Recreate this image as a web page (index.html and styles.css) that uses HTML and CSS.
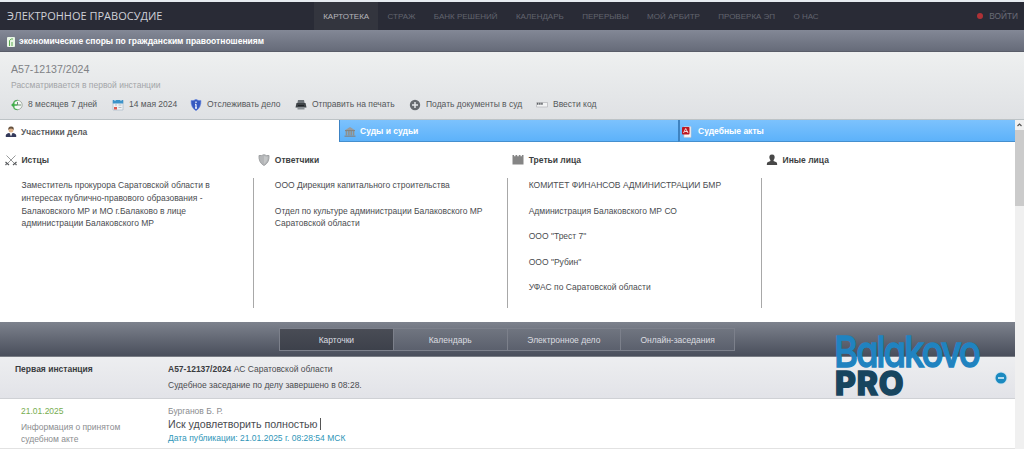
FILE: index.html
```html
<!DOCTYPE html>
<html lang="ru">
  <head>
    <meta charset="UTF-8" />
    <meta name="viewport" content="width=device-width, initial-scale=1.0" />
    <title>Электронное правосудие</title>
    <link rel="stylesheet" href="styles.css">
  </head>
  <body>
    <header class="topbar">
      <div class="brand">ЭЛЕКТРОННОЕ ПРАВОСУДИЕ</div>
      <nav class="menu">
        <a class="active">КАРТОТЕКА</a>
        <a>СТРАЖ</a>
        <a>БАНК РЕШЕНИЙ</a>
        <a>КАЛЕНДАРЬ</a>
        <a>ПЕРЕРЫВЫ</a>
        <a>МОЙ АРБИТР</a>
        <a>ПРОВЕРКА ЭП</a>
        <a>О НАС</a>
      </nav>
      <div class="login"><i></i>ВОЙТИ</div>
    </header>

    <div class="category">
      <svg width="8" height="10" viewBox="0 0 8 10">
        <rect width="8" height="10" rx="1" fill="#e9f6e6" />
        <path d="M2.5 9V3.5L4.2 2H6M5 5v4" stroke="#5cab52" fill="none" />
      </svg>
      <span>экономические споры по гражданским правоотношениям</span>
    </div>

    <section class="case">
      <h1>А57-12137/2024</h1>
      <p class="status">Рассматривается в первой инстанции</p>
      <div class="tools">
        <a class="t1">
          <svg width="12" height="12" viewBox="0 0 12 12">
            <circle cx="6.5" cy="6" r="4.7" fill="#f4f8f4" stroke="#a3aca5" />
            <path d="M6.5 10.7A4.7 4.7 0 0 1 2.5 8.5M2.5 3.5Q4 1.3 6.5 1.3" fill="none" stroke="#4fb356" stroke-width="1.3" />
            <path d="M0 6l3.5-3v2.3h3v1.4h-3V9z" fill="#3fae48" />
            <path d="M6.5 3v3H10" fill="none" stroke="#6f8b74" />
          </svg>
          <span>8 месяцев 7 дней</span>
        </a>
        <a class="t2">
          <svg width="12" height="12" viewBox="0 0 12 12">
            <path d="M1 1.5h10V11H1z" fill="#eef1f4" stroke="#9fb4c4" stroke-width=".6" />
            <path d="M.8 1h10.4v3.5H.8z" fill="#3c93c9" />
            <path d="M3 0v2M9 0v2" stroke="#dce8f0" />
            <path d="M3 6h2M6.5 6h3M6.5 8.5h3" stroke="#b4bcc4" />
            <path d="M2 8h3v2.5H2z" fill="#dd5a4e" />
          </svg>
          <span>14 мая 2024</span>
        </a>
        <a class="t3">
          <svg width="12" height="12" viewBox="0 0 12 12">
            <path d="M6 .3Q8.5 2 11 1.5 11.3 8.5 6 11.7.7 8.5 1 1.5 3.5 2 6 .3z" fill="#3559c0" stroke="#6d8be0" stroke-width=".6" />
            <path d="M6 2.5v1.6M6 5.2v4M5 5.5h1M5 9h2" stroke="#e8eefc" stroke-width="1.3" />
          </svg>
          <span>Отслеживать дело</span>
        </a>
        <a class="t4">
          <svg width="12" height="12" viewBox="0 0 12 12">
            <path d="M3 1h6l.8 4H2.2z" fill="#6d7378" />
            <path d="M1.5 4h9l1 4.5H.5z" fill="#3e4347" />
            <path d="M2.5 8h7v2.5h-7z" fill="#8a9095" />
            <path d="M3 6.5h6" stroke="#202327" />
          </svg>
          <span>Отправить на печать</span>
        </a>
        <a class="t5">
          <svg width="12" height="12" viewBox="0 0 12 12">
            <circle cx="6" cy="6" r="5.2" fill="#666a6e" />
            <path d="M6 3v6M3 6h6" stroke="#e4e6e8" stroke-width="1.5" />
          </svg>
          <span>Подать документы в суд</span>
        </a>
        <a class="t6">
          <svg width="12" height="12" viewBox="0 0 12 12">
            <path d="M.5 3.5h11V8H.5z" fill="#f2f3f4" stroke="#b4b6b9" stroke-width=".7" />
            <path d="M1 4.7h6" stroke="#5e6266" stroke-width="2" stroke-dasharray="1.5 .6" />
          </svg>
          <span>Ввести код</span>
        </a>
      </div>
    </section>

    <div class="page">
      <main>
        <div class="tabs">
          <div class="tab current">
            <svg width="12" height="12" viewBox="0 0 12 12">
              <path d="M.8 11V9.5Q1 7.5 4.2 7h3.6q3.2.5 3.4 2.5V11z" fill="#34395a" />
              <path d="M4.5 7L6 10.5 7.5 7z" fill="#f5f5f5" />
              <circle cx="6" cy="4" r="2.5" fill="#dfb48c" />
              <path d="M3.3 4Q2.8.8 6 .6T8.7 4Q8 2.5 6 2.5T3.3 4z" fill="#66523f" />
            </svg>
            <span>Участники дела</span>
          </div>
          <div class="tab">
            <svg width="12" height="12" viewBox="0 0 12 12">
              <path d="M6 1l5 3.2H1z" fill="#9b9c9c" />
              <path d="M2.5 5v4.5M4.9 5v4.5M7.2 5v4.5M9.5 5v4.5" stroke="#92918c" stroke-width="1.7" />
              <path d="M.5 10.2h11M1 4.6h10" stroke="#857f78" />
            </svg>
            <span>Суды и судьи</span>
          </div>
          <div class="tab acts">
            <svg width="12" height="12" viewBox="0 0 12 12">
              <path d="M3 .7h7v10.6H3z" fill="#f8f4f4" stroke="#c7cbd1" stroke-width=".6" />
              <rect x="1" y="1" width="7.5" height="7.5" rx=".8" fill="#bd1822" />
              <path d="M2.5 7L4.7 2.5 7 7M3.5 5.5h3" fill="none" stroke="#fff" stroke-width=".8" />
            </svg>
            <span>Судебные акты</span>
          </div>
        </div>

        <div class="sides">
          <div class="side">
            <h2>
              <svg width="12" height="12" viewBox="0 0 12 12">
                <path d="M1.5 1.5L10 10M10.5 1.5L2 10" stroke="#8c8e90" stroke-width=".9" />
                <path d="M.5 8L4 11M11.5 8L8 11M1.5 10l-1 1M10.5 10l1 1" stroke="#55585b" stroke-width="1.2" />
              </svg>
              <span>Истцы</span>
            </h2>
            <div class="list">
              <p>Заместитель прокурора Саратовской области в<br>интересах публично-правового образования -<br>Балаковского МР и МО г.Балаково в лице<br>администрации Балаковского МР</p>
            </div>
          </div>
          <div class="side">
            <h2>
              <svg width="12" height="12" viewBox="0 0 12 12">
                <path d="M6 .7Q8.5 2 11 1.5 11.5 8.5 6 11.5.5 8.5 1 1.5 3.5 2 6 .7z" fill="#b4b6b8" stroke="#9fa1a3" />
                <path d="M6 2Q7.5 3 9.7 2.8 9.7 7.5 6 10z" fill="#c4c6c7" />
              </svg>
              <span>Ответчики</span>
            </h2>
            <div class="list">
              <p>ООО Дирекция капитального строительства</p>
              <p>Отдел по культуре администрации Балаковского МР<br>Саратовской области</p>
            </div>
          </div>
          <div class="side">
            <h2>
              <svg width="12" height="12" viewBox="0 0 12 12">
                <path d="M.5 1h1.6v1.3h1.4V1h1.7v1.3h1.6V1h1.7v1.3h1.4V1h1.6v9.5H.5z" fill="#858585" />
              </svg>
              <span>Третьи лица</span>
            </h2>
            <div class="list">
              <p>КОМИТЕТ ФИНАНСОВ АДМИНИСТРАЦИИ БМР</p>
              <p>Администрация Балаковского МР СО</p>
              <p>ООО "Трест 7"</p>
              <p>ООО "Рубин"</p>
              <p>УФАС по Саратовской области</p>
            </div>
          </div>
          <div class="side">
            <h2>
              <svg width="12" height="12" viewBox="0 0 12 12">
                <path d="M6 .5C8.5.5 9 2.5 8.5 4.2 8 5.8 7.5 6 7.5 7l3 1.2Q11.200 8.800 11.200 11H.8Q.8 8.800 1.500 8.200L4.500 7C4.500 6 4 5.800 3.500 4.200 3 2.500 3.500.5 6 .5z" fill="#484848" />
              </svg>
              <span>Иные лица</span>
            </h2>
            <div class="list"></div>
          </div>
        </div>

        <div class="views">
          <div class="switch">
            <a class="on">Карточки</a>
            <a>Календарь</a>
            <a>Электронное дело</a>
            <a>Онлайн-заседания</a>
          </div>
        </div>

        <div class="instance">
          <div class="left"><b>Первая инстанция</b></div>
          <div class="right">
            <div class="number"><b>А57-12137/2024</b> АС Саратовской области</div>
            <div>Судебное заседание по делу завершено в 08:28.</div>
          </div>
          <svg class="toggle" width="14" height="14" viewBox="0 0 14 14">
            <circle cx="7" cy="7" r="6.5" fill="#cfe3ef" />
            <circle cx="7" cy="7" r="5.5" fill="#1b8ac0" />
            <path d="M4 7h6" stroke="#e6f5fc" stroke-width="1.5" />
          </svg>
        </div>

        <div class="event">
          <div class="left">
            <div class="date">21.01.2025</div>
            <div class="kind">Информация о принятом<br>судебном акте</div>
          </div>
          <div class="right">
            <div class="judge">Бурганов Б. Р.</div>
            <div class="result"><span>Иск удовлетворить полностью</span></div>
            <div class="published">Дата публикации: 21.01.2025 г. 08:28:54 МСК</div>
          </div>
        </div>
      </main>

      <div class="scrollbar">
        <svg width="9" height="10" viewBox="0 0 9 10">
          <path d="M2.5 6l2-2 2 2" fill="none" stroke="#555" stroke-width="1.2" />
        </svg>
        <div class="thumb"></div>
      </div>
    </div>

    <div class="logo">
      <div class="logo-city">Balakovo</div>
      <div class="logo-pro">PRO</div>
    </div>
  </body>
</html>
```

FILE: styles.css
```css
* {
  box-sizing: border-box;
}

body {
  margin: 0;
  height: 449px;
  overflow: hidden;
  position: relative;
  display: flex;
  flex-direction: column;
  border-top: 2px solid #e6ebf0;
  background: #fff;
  color: #4a4c50;
  font: 8.5px/13px "Liberation Sans", Arial, sans-serif;
  white-space: nowrap;
}

h1,
h2,
p {
  margin: 0;
  font-weight: normal;
}

svg {
  flex: none;
  display: block;
}

.topbar {
  height: 28px;
  display: flex;
  align-items: stretch;
  background: #292b36;
  line-height: 28px;
}

.brand {
  width: 314px;
  padding-left: 7px;
  color: #cfd0d6;
  font-family: "Open Sans", sans-serif;
  font-size: 11px;
}

.menu {
  display: flex;
  flex: 1;
  color: #62646e;
  font-size: 8px;
  line-height: 30px;
}

.menu a {
  padding: 0 9.2px;
}

.menu .active {
  background: #33353e;
  color: #b5b6bb;
}

.login {
  display: flex;
  align-items: center;
  gap: 6px;
  padding-right: 6px;
  color: #6a6c76;
  font-size: 8.3px;
}

.login i {
  width: 6px;
  height: 6px;
  border-radius: 50%;
  background: #ae3136;
}

.category {
  height: 22px;
  display: flex;
  align-items: center;
  gap: 4px;
  padding: 2px 0 0 7px;
  background: linear-gradient(#838896, #666b79);
  border-bottom: 1px solid #595d69;
  color: #fff;
  font-size: 8.5px;
  font-weight: bold;
}

.case {
  height: 68px;
  padding: 10px 11px 0;
  background: linear-gradient(#eef0f0, #dfe1e4);
  border-bottom: 1px solid #bdc3c6;
}

.case h1 {
  color: #808285;
  font-size: 10.6px;
  line-height: 15px;
}

.status {
  margin-top: 2px;
  color: #a3a5a8;
  font-size: 8.5px;
  line-height: 13px;
}

.tools {
  display: flex;
  margin-top: 6px;
  color: #54575a;
}

.tools a {
  display: flex;
  align-items: center;
  gap: 5px;
}

.t1,
.t2,
.t3,
.t4,
.t5 {
  flex: none;
}

.t1 {
  width: 101px;
}

.t2 {
  width: 78px;
}

.t3 {
  width: 105px;
}

.t4 {
  width: 114px;
}

.t5 {
  width: 127px;
}

.page {
  flex: 1;
  display: flex;
}

main {
  width: 1015px;
}

.tabs {
  display: flex;
  height: 22px;
}

.tab {
  width: 339px;
  display: flex;
  align-items: center;
  gap: 4px;
  padding: 2px 0 0 4px;
  background: linear-gradient(#7cc2fd, #5db2fa);
  border-left: 1px solid #3c83c4;
  border-bottom: 1px solid #458fce;
  color: #fff;
  font-weight: bold;
}

.tab.current {
  width: 339px;
  padding-left: 5px;
  background: #fff;
  border: 0;
  color: #5a5c60;
}

.tab.acts {
  width: 337px;
  border-left: 2px solid #3f83c0;
  padding-left: 1px;
  gap: 5px;
}

.sides {
  display: flex;
  height: 180px;
  padding-top: 11px;
}

.side {
  width: 254px;
}

.side:first-child {
  width: 253.4px;
}

.side h2 {
  display: flex;
  align-items: center;
  gap: 4.5px;
  height: 14px;
  padding-left: 5px;
  color: #3d3f42;
  font-size: 8.5px;
  font-weight: bold;
}

.list {
  height: 130px;
  margin-top: 11px;
  padding: 1px 0 0 20.5px;
  border-left: 1px solid #a8a8a8;
  line-height: 12.8px;
}

.side:first-child .list {
  border-left-color: transparent;
}

.list p {
  margin-bottom: 12.8px;
}

.views {
  height: 35px;
  padding: 6px 0 0 279px;
  background: linear-gradient(#7d828d, #494e5b);
  border-bottom: 1px solid #787c84;
}

.switch {
  display: flex;
  width: 456px;
  height: 23px;
  border: 1px solid #7c808b;
  background: linear-gradient(#707580, #5b606d);
  color: #dcdde0;
  line-height: 23px;
  text-align: center;
}

.switch a {
  flex: 1;
  border-right: 1px solid #7c808b;
}

.switch a:last-child {
  border-right: 0;
}

.switch .on {
  background: linear-gradient(#494c55, #3d414b);
}

.instance {
  display: flex;
  height: 42px;
  padding: 5px 7px 0 15px;
  background: linear-gradient(#edeef0, #e2e3e8);
  border-bottom: 1px solid #cfd1d5;
  line-height: 15.5px;
}

.left {
  width: 153px;
  flex: none;
}

.right {
  flex: 1;
}

.instance b {
  color: #3a3c40;
}

.toggle {
  margin-top: 9px;
}

.event {
  display: flex;
  height: 50px;
  padding: 6px 8px 0 15px;
  border-bottom: 1px solid #e2e2e2;
  color: #8b8d90;
}

.event .left {
  padding-left: 6px;
}

.date {
  color: #77ad4f;
}

.kind {
  margin-top: 3px;
  line-height: 12px;
}

.result {
  color: #494b4f;
  font-size: 10.65px;
  line-height: 13px;
}

.result span {
  border-right: 1px solid #555;
  padding-right: 2px;
}

.published {
  margin-top: 1px;
  color: #2f96b8;
}

.scrollbar {
  width: 9px;
  background: #f0f0f0;
}

.thumb {
  height: 76px;
  background: #cbcbcb;
}

/* logo overlaps the views bar and the instance row */
.logo {
  position: absolute;
  left: 834px;
  top: 330px;
  width: 160px;
  font-family: Inter, sans-serif;
}

.logo-city {
  width: 190px;
  color: #2083c0;
  font-size: 43px;
  font-weight: 500;
  font-feature-settings: "cv11";
  line-height: 38px;
  letter-spacing: -2.5px;
  -webkit-text-stroke: 1.3px #2083c0;
  transform: scaleX(0.85);
  transform-origin: left;
}

.logo-pro {
  padding-left: 1px;
  color: #17455f;
  font-size: 32px;
  font-weight: 800;
  line-height: 27px;
  letter-spacing: 0.8px;
  -webkit-text-stroke: 1.5px #17455f;
}
```
